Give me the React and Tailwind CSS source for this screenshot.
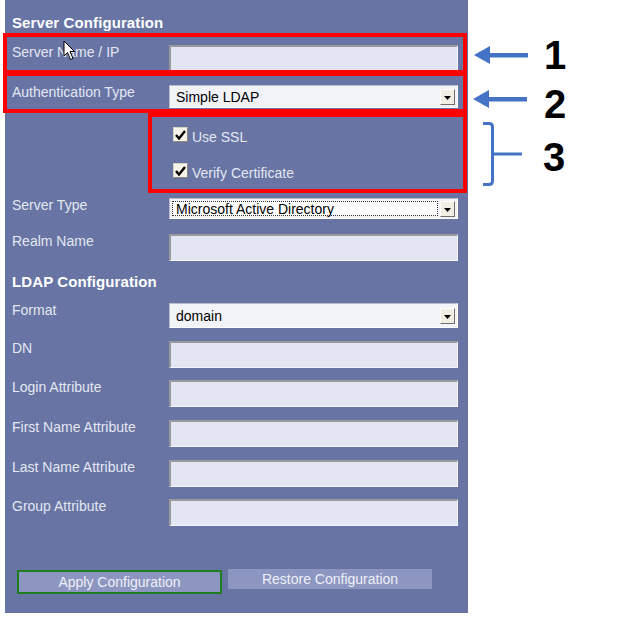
import React from "react";

const FONT = { fontFamily: '"Liberation Sans", Arial, sans-serif' };

function Label({ children, className = "" }) {
  return (
    <div className={"w-[157px] shrink-0 text-[14px] leading-[14px] text-[#e4e7f1] " + className}>
      {children}
    </div>
  );
}

function TextInput({ h = "h-[27px]" }) {
  return (
    <div
      className={
        "w-[289px] bg-[#e3e6f2] border-t-2 border-l-2 border-b border-r border-t-[#9a9a9e] border-l-[#9a9a9e] border-b-[#f5f6fb] border-r-[#f5f6fb] " +
        h
      }
    />
  );
}

function DropBtn() {
  return (
    <div className="ml-auto mr-[2px] w-[15px] h-[16px] bg-[#f1eee4] border border-t-white border-l-white border-b-[#6e6e6e] border-r-[#6e6e6e] flex items-center justify-center">
      <svg width="7" height="4" viewBox="0 0 7 4" className="mt-[3px]">
        <polygon points="0,0 7,0 3.5,4" fill="#000" />
      </svg>
    </div>
  );
}

function Select({ value, h = "h-[23px]", focused = false }) {
  return (
    <div
      className={
        "w-[289px] bg-[#f2f3f9] border border-t-[#b9bccb] border-l-[#b9bccb] border-b-white border-r-white flex items-center text-[14px] text-black " +
        h
      }
    >
      {focused ? (
        <div className="ml-[2px] h-[calc(100%-4px)] w-[266px] border border-dotted border-[#333] bg-white flex items-center pl-[3px] leading-[14px]">
          {value}
        </div>
      ) : (
        <div className="pl-[6px] leading-[14px]">{value}</div>
      )}
      <DropBtn />
    </div>
  );
}

function Checkbox() {
  return (
    <div className="w-[15px] h-[15px] bg-[#f6f3ea] border border-t-[#d8d2c0] border-l-[#d8d2c0] border-b-[#8c877a] border-r-[#8c877a] flex items-center justify-center">
      <svg width="11" height="10" viewBox="0 0 11 10">
        <path d="M1 5 L4 8.5 L10 1" stroke="#000" strokeWidth="2.4" fill="none" />
      </svg>
    </div>
  );
}

function Row({ label, children, className = "" }) {
  return (
    <div className={"flex items-start " + className}>
      <Label>{label}</Label>
      {children}
    </div>
  );
}

function Arrow() {
  return (
    <svg width="56" height="20" viewBox="0 0 56 20">
      <polygon points="1,10 17,1 17,19" fill="#4472c4" />
      <rect x="15" y="8" width="40" height="4.5" fill="#4472c4" />
    </svg>
  );
}

export default function App() {
  return (
    <div className="relative w-[623px] h-[618px] bg-white flex" style={FONT}>
      {/* Panel */}
      <div className="ml-[5px] w-[463px] h-[613px] bg-[#6774a4] pl-[7px] flex flex-col">
        <div className="mt-[15px] text-[15px] leading-[16px] font-bold text-white tracking-[0.1px]">
          Server Configuration
        </div>
        <Row label="Server Name / IP" className="mt-[14px]">
          <TextInput h="h-[26px]" />
        </Row>
        <Row label="Authentication Type" className="mt-[14px]">
          <Select value="Simple LDAP" h="h-[23px]" />
        </Row>
        <div className="mt-[19px] ml-[161px] flex items-center h-[15px]">
          <Checkbox />
          <span className="ml-[4px] mt-[4px] text-[14px] leading-[14px] text-[#e4e7f1]">Use SSL</span>
        </div>
        <div className="mt-[21px] ml-[161px] flex items-center h-[15px]">
          <Checkbox />
          <span className="ml-[4px] mt-[4px] text-[14px] leading-[14px] text-[#e4e7f1]">Verify Certificate</span>
        </div>
        <Row label="Server Type" className="mt-[20px]">
          <Select value="Microsoft Active Directory" h="h-[21px]" focused />
        </Row>
        <Row label="Realm Name" className="mt-[15px]">
          <TextInput />
        </Row>
        <div className="mt-[13px] text-[15px] leading-[16px] font-bold text-white tracking-[0.1px]">
          LDAP Configuration
        </div>
        <Row label="Format" className="mt-[13px]">
          <Select value="domain" h="h-[25px]" />
        </Row>
        <Row label="DN" className="mt-[13px]">
          <TextInput />
        </Row>
        <Row label="Login Attribute" className="mt-[12px]">
          <TextInput />
        </Row>
        <Row label="First Name Attribute" className="mt-[13px]">
          <TextInput />
        </Row>
        <Row label="Last Name Attribute" className="mt-[13px]">
          <TextInput />
        </Row>
        <Row label="Group Attribute" className="mt-[12px]">
          <TextInput />
        </Row>
        <div className="mt-[43px] ml-[5px] flex items-start">
          <div className="mt-[1px] w-[205px] h-[24px] border-2 border-[#1e7d1e] bg-[#8d96c1] flex items-center justify-center text-[14px] leading-[14px] text-[#eef0f8]">
            Apply Configuration
          </div>
          <div className="ml-[6px] w-[204px] h-[20px] bg-[#8d96c1] flex items-center justify-center text-[14px] leading-[14px] text-[#eef0f8]">
            Restore Configuration
          </div>
        </div>
      </div>

      {/* Annotation column */}
      <div className="flex-1 flex flex-col">
        <div className="mt-[35px] h-[40px] flex items-center">
          <div className="ml-[5px]">
            <Arrow />
          </div>
          <div className="ml-[15px] text-[40px] leading-[40px] font-bold text-black">1</div>
        </div>
        <div className="mt-[4px] h-[40px] flex items-center">
          <div className="ml-[4px]">
            <Arrow />
          </div>
          <div className="ml-[16px] mt-[9px] text-[40px] leading-[40px] font-bold text-black">2</div>
        </div>
        <div className="h-[70px] flex items-center">
          <svg width="45" height="66" viewBox="0 0 45 66" className="ml-[12px]">
            <path
              d="M3 2.5 H9 Q12.5 2.5 12.5 6 V60 Q12.5 63.5 9 63.5 H3 M12.5 33 H42"
              stroke="#4472c4"
              strokeWidth="3"
              fill="none"
            />
          </svg>
          <div className="ml-[18px] mt-[6px] text-[40px] leading-[40px] font-bold text-black">3</div>
        </div>
      </div>

      {/* Red annotation boxes */}
      <div className="absolute left-[3px] top-[33px] w-[464px] h-[41px] border-4 border-[#ff0000] pointer-events-none" />
      <div className="absolute left-[3px] top-[72px] w-[464px] h-[41px] border-4 border-[#ff0000] pointer-events-none" />
      <div className="absolute left-[148px] top-[113px] w-[319px] h-[80px] border-4 border-[#ff0000] pointer-events-none" />

      {/* Mouse cursor */}
      <svg
        className="absolute left-[63px] top-[40px]"
        width="13"
        height="21"
        viewBox="0 0 13 21"
      >
        <path
          d="M1 1 L1 16 L4.5 12.5 L7.5 19.5 L10 18.5 L7 11.5 L11.5 11.5 Z"
          fill="#fff"
          stroke="#000"
          strokeWidth="1"
          strokeLinejoin="round"
        />
      </svg>
    </div>
  );
}
